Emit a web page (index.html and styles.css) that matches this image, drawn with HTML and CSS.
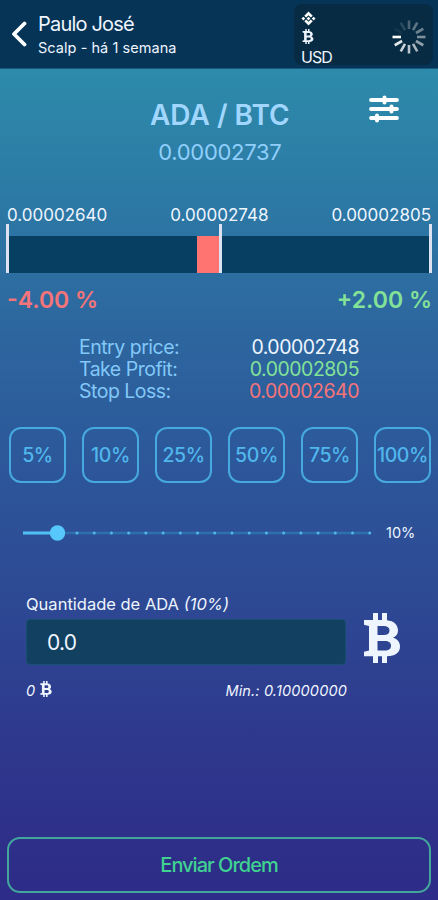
FILE: index.html
```html
<!DOCTYPE html>
<html lang="pt-BR">
<head>
  <meta charset="UTF-8">
  <title>ADA / BTC</title>
  <link rel="stylesheet" href="styles.css">
</head>
<body>
  <svg width="0" height="0" class="defs">
    <symbol id="btc" viewBox="0 0 38 50">
      <path fill="currentColor" fill-rule="evenodd" d="M1 7h9V0h5v7h4V0h5v7.300C31 8 35 12 35 17.500c0 3.500-1.800 6-5 7.300 4.600 1.200 7 4.500 7 8.600 0 6-4.500 9.600-13 9.800V50h-5v-6.800h-4V50h-5v-6.800H1v-4.500l5-1.200V13l-5-1.200zM14.500 13v9h6c4 0 6-1.500 6-4.500S24.500 13 20.500 13zM14.500 28v9.500h7c4.500 0 6.500-1.500 6.500-4.700S26 28 21.500 28z"/>
    </symbol>
  </svg>

  <header class="topbar">
    <svg class="back" viewBox="0 0 18 26"><path d="M14.500 2.500 4 13l10.500 10.500" fill="none" stroke="#fff" stroke-width="3.800" stroke-linecap="round" stroke-linejoin="round"/></svg>
    <div class="trader">
      <div class="name">Paulo José</div>
      <div class="kind">Scalp - há 1 semana</div>
    </div>
    <div class="wallet">
      <div class="coins">
        <svg class="bnb" viewBox="0 0 16 16" fill="#fff"><path d="M8 .5 12.500 5l-2 2L8 4.500 5.500 7l-2-2zM2.500 6l2 2-2 2-2-2zM13.500 6l2 2-2 2-2-2zM8 6l2 2-2 2-2-2zM5.500 9 8 11.500 10.500 9l2 2L8 15.500 3.500 11z"/></svg>
        <svg class="btc-small"><use href="#btc"/></svg>
        <div class="usd">USD</div>
      </div>
      <svg class="spinner" viewBox="-18 -18 36 36" stroke="#fff" stroke-width="2.600">
        <path d="M-8-0H-16.500" opacity="1"/>
        <path d="M-8-0H-16.500" transform="rotate(-30)" opacity=".88"/>
        <path d="M-8-0H-16.500" transform="rotate(-60)" opacity=".8"/>
        <path d="M-8-0H-16.500" transform="rotate(-90)" opacity=".72"/>
        <path d="M-8-0H-16.500" transform="rotate(-120)" opacity=".65"/>
        <path d="M-8-0H-16.500" transform="rotate(-150)" opacity=".55"/>
        <path d="M-8-0H-16.500" transform="rotate(180)" opacity=".48"/>
        <path d="M-8-0H-16.500" transform="rotate(150)" opacity=".4"/>
        <path d="M-8-0H-16.500" transform="rotate(120)" opacity=".35"/>
        <path d="M-8-0H-16.500" transform="rotate(90)" opacity=".27"/>
        <path d="M-8-0H-16.500" transform="rotate(60)" opacity=".14"/>
        <path d="M-8-0H-16.500" transform="rotate(30)" opacity=".05"/>
      </svg>
    </div>
  </header>

  <main>
    <section class="pair">
      <div class="pair-text">
        <h1>ADA / BTC</h1>
        <div class="price">0.00002737</div>
      </div>
      <svg class="settings" viewBox="0 0 30 28" stroke="#fff" stroke-linecap="round" fill="none">
        <path stroke-width="3.800" d="M2 5h26M2 14h26M2 23h26"/>
        <path stroke-width="4" d="M15.500 2.500v5M22.500 11.500v5M8 20.500v5"/>
      </svg>
    </section>

    <section class="range">
      <div class="range-labels">
        <span>0.00002640</span><span>0.00002748</span><span>0.00002805</span>
      </div>
      <div class="range-bar">
        <i class="tick"></i>
        <div class="track below"></div>
        <div class="loss"></div>
        <i class="tick"></i>
        <div class="track"></div>
        <i class="tick"></i>
      </div>
      <div class="range-pct">
        <span class="red">-4.00 %</span><span class="green">+2.00 %</span>
      </div>
    </section>

    <dl class="details">
      <dt>Entry price:</dt><dd>0.00002748</dd>
      <dt>Take Profit:</dt><dd class="green">0.00002805</dd>
      <dt>Stop Loss:</dt><dd class="red">0.00002640</dd>
    </dl>

    <div class="percents">
      <button>5%</button>
      <button>10%</button>
      <button>25%</button>
      <button>50%</button>
      <button>75%</button>
      <button>100%</button>
    </div>

    <div class="slider">
      <svg viewBox="0 0 352 16">
        <path d="M3 8H350" stroke="#2e70ae" stroke-width="2.500"/>
        <path d="M3 8H37" stroke="#50bff5" stroke-width="3"/>
        <path d="M57 8H352" stroke="#50b8ec" stroke-width="3" stroke-linecap="round" stroke-dasharray="0 17.220"/>
        <circle cx="37.500" cy="8" r="7.700" fill="#57c8fb"/>
      </svg>
      <span>10%</span>
    </div>

    <section class="amount">
      <label>Quantidade de ADA <em>(10%)</em></label>
      <div class="amount-row">
        <input type="text" value="0.0">
        <svg class="btc-big"><use href="#btc"/></svg>
      </div>
      <div class="amount-info">
        <span class="total">0 <svg class="btc-tiny"><use href="#btc"/></svg></span>
        <span class="min">Min.: 0.10000000</span>
      </div>
    </section>

    <button class="send">Enviar Ordem</button>
  </main>
</body>
</html>
```

FILE: styles.css
```css
* {
  box-sizing: border-box;
}
body {
  margin: 0;
  height: 900px;
  font-family: Inter, sans-serif;
  color: #eef5ff;
  display: flex;
  flex-direction: column;
  overflow: hidden;
}
svg {
  display: block;
  flex: none;
}
.defs {
  position: absolute;
}
.topbar {
  height: 69px;
  flex: none;
  background: #053457;
  border-bottom: 1px solid #17587c;
  display: flex;
  padding: 4px 5px 0 10px;
}
.back {
  width: 18px;
  height: 26px;
  margin-top: 17px;
}
.trader {
  margin: 8px 0 0 10px;
  flex: 1;
}
.name {
  font-size: 20px;
  line-height: 25px;
  letter-spacing: -0.8px;
}
.kind {
  font-size: 14.5px;
  line-height: 21px;
  letter-spacing: 0.05px;
}
.wallet {
  width: 139px;
  height: 61px;
  background: #072b42;
  border-radius: 8px;
  display: flex;
  justify-content: space-between;
  padding: 7px 6px 0 7px;
}
.bnb {
  width: 15px;
  height: 15px;
}
.btc-small {
  width: 12px;
  height: 15px;
  margin: 3px 0 0 1px;
}
.usd {
  font-size: 16px;
  line-height: 20px;
  letter-spacing: -0.9px;
  margin-top: 3px;
}
.spinner {
  width: 36px;
  height: 36px;
  margin-top: 8px;
}
main {
  flex: 1;
  background: linear-gradient(#2d8bab 0, #2c79a5 130px, #2d689f 250px, #2c5a9b 370px, #2d5097 460px, #2d4994 530px, #2e3d8f 630px, #2e3089 760px, #2d2c88 100%);
  padding: 0 7px;
}
.pair {
  height: 136px;
  padding: 28px 32px 0 143px;
  display: flex;
  justify-content: space-between;
}
.pair-text {
  text-align: center;
  color: #a1d7ff;
}
h1 {
  margin: 0;
  font-size: 28px;
  font-weight: 600;
  line-height: 36px;
}
.price {
  font-size: 22px;
  line-height: 38px;
  letter-spacing: -0.3px;
  color: #90cffb;
}
.settings {
  width: 30px;
  height: 28px;
  margin-top: -2px;
}
.range-labels {
  display: flex;
  justify-content: space-between;
  font-size: 17px;
  line-height: 20px;
}
.range-bar {
  display: flex;
  align-items: flex-end;
  height: 49px;
  margin: -1px -1px 0;
}
.tick {
  width: 3px;
  height: 49px;
  background: #dce2f2;
}
.track {
  flex: 1;
  height: 37px;
  background: #063f61;
}
.track.below {
  flex: 0 0 188px;
}
.loss {
  width: 22px;
  height: 37px;
  background: #ff7470;
}
.range-pct {
  display: flex;
  justify-content: space-between;
  font-size: 23px;
  font-weight: 600;
  line-height: 30px;
  margin: 12px -1px 0 0;
}
.red {
  color: #f57479;
}
.green {
  color: #83e298;
}
.details {
  display: grid;
  grid-template-columns: 1fr auto;
  width: 280px;
  margin: 21px 0 0 72px;
  font-size: 19.5px;
  line-height: 22px;
  letter-spacing: -0.5px;
}
dt {
  color: #82c8f8;
}
dd {
  margin: 0;
  text-align: right;
}
.percents {
  display: flex;
  justify-content: space-between;
  margin: 25px 0 0 2px;
}
.percents button {
  width: 57px;
  height: 56px;
  padding: 0;
  border: 2px solid #46a9df;
  border-radius: 12px;
  background: none;
  color: #50b6ec;
  font: 500 19.5px Inter, sans-serif;
  letter-spacing: -0.4px;
}
.slider {
  display: flex;
  align-items: center;
  gap: 14px;
  margin: 41px 0 0 13px;
  font-size: 14.5px;
}
.slider svg {
  width: 352px;
  height: 16px;
}
.amount {
  margin: 52px 0 0 19px;
}
.amount label {
  display: block;
  font-size: 16.5px;
  line-height: 22px;
}
.amount-row {
  display: flex;
  gap: 17px;
}
.amount input {
  width: 320px;
  height: 46px;
  margin-top: 4px;
  padding: 0 20px;
  border: 1px solid #17506f;
  border-radius: 4px;
  background: #114061;
  color: #eef5ff;
  font: 21px Inter, sans-serif;
  letter-spacing: -0.7px;
}
.btc-big {
  width: 38px;
  height: 50px;
  margin-top: -2px;
}
.amount-info {
  display: flex;
  justify-content: space-between;
  width: 321px;
  margin-top: 15px;
  font-size: 14.5px;
  font-style: italic;
  line-height: 22px;
}
.min {
  letter-spacing: 0.15px;
}
.total {
  display: flex;
  gap: 5px;
}
.btc-tiny {
  width: 12px;
  height: 16px;
  margin-top: 1px;
}
.send {
  display: block;
  width: 424px;
  height: 56px;
  margin-top: 135px;
  border: 2px solid #43a69d;
  border-radius: 13px;
  background: none;
  color: #3fd291;
  font: 500 20px Inter, sans-serif;
  letter-spacing: -1px;
}
```
